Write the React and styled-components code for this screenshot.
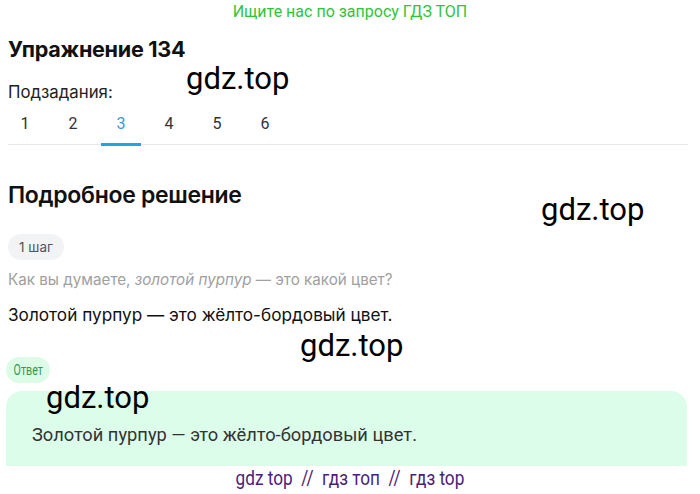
import React from "react";
import styled, { createGlobalStyle } from "styled-components";

const Global = createGlobalStyle`
  html, body { margin: 0; padding: 0; background: #fff; }
  body { font-family: Inter, "Noto Sans", sans-serif; color: #111; }
`;

const Page = styled.div`
  position: relative;
  width: 700px;
  height: 494px;
  overflow: hidden;
  padding: 0 8px;
  box-sizing: border-box;
`;

const Banner = styled.div`
  text-align: center;
  font-family: Roboto, sans-serif;
  font-size: 16px;
  line-height: 24px;
  color: #2fc43c;
  margin-left: -8px;
  margin-right: -8px;
`;

const Title = styled.h1`
  margin: 12px 0 0;
  font-family: Inter, sans-serif;
  font-size: 21.6px;
  line-height: 26px;
  font-weight: 700;
  letter-spacing: -0.3px;
  color: #111;
`;

const SubLabel = styled.div`
  margin-top: 20px;
  font-size: 16.8px;
  line-height: 20px;
  color: #222;
`;

const Tabs = styled.div`
  display: flex;
  margin-top: 10px;
  border-bottom: 1px solid #e8e8e8;
  margin-right: 4px;
`;

const Tab = styled.div`
  width: 40px;
  margin-right: 8px;
  text-align: center;
  font-family: Roboto, sans-serif;
  font-size: 16px;
  line-height: 20px;
  padding: 2px 0 9px;
  color: ${(p) => (p.$active ? "#3d9bd1" : "#333")};
  border-bottom: 3px solid ${(p) => (p.$active ? "#1ea7e4" : "transparent")};
  margin-bottom: -2px;
  &:first-child { margin-left: -3px; }
`;

const SectionTitle = styled.h2`
  margin: 36px 0 0;
  font-size: 23px;
  line-height: 28px;
  font-weight: 600;
  letter-spacing: -0.3px;
  color: #111;
`;

const Pill = styled.span`
  display: inline-flex;
  align-items: center;
  justify-content: center;
  height: 26px;
  width: ${(p) => (p.$green ? "44px" : "56px")};
  border-radius: 13px;
  font-size: ${(p) => (p.$green ? "14px" : "13.5px")};
  background: ${(p) => (p.$green ? "#dcfce8" : "#f2f3f5")};
  color: ${(p) => (p.$green ? "#2f9a4c" : "#555")};
  font-family: ${(p) => (p.$green ? "Roboto, sans-serif" : "Inter, sans-serif")};
  white-space: nowrap;
`;

const Narrow = styled.span`
  display: inline-block;
  transform: scaleX(0.76);
`;

const StepRow = styled.div`
  margin-top: 25px;
  display: flex;
`;

const Question = styled.p`
  margin: 10px 0 0;
  font-size: 15.2px;
  line-height: 20px;
  color: #a0a0a0;
  em { font-style: italic; }
`;

const Answer = styled.p`
  margin: 14px 0 0;
  font-size: 17.2px;
  line-height: 22px;
  color: #111;
`;

const AnswerRow = styled.div`
  margin-top: 31px;
  margin-left: -2px;
  display: flex;
`;

const AnswerBox = styled.div`
  margin: 8px 5px 0 -2px;
  height: 75px;
  background: #dcfde9;
  border-radius: 16px 16px 0 0;
  display: flex;
  align-items: center;
  padding: 11px 0 0 26px;
  box-sizing: border-box;
  font-family: Roboto, sans-serif;
  font-size: 18.3px;
  color: #333;
`;

const Footer = styled.div`
  text-align: center;
  font-family: Roboto, sans-serif;
  font-size: 20px;
  line-height: 24px;
  color: #4b1d7c;
`;

const FooterText = styled.span`
  display: inline-block;
  transform: scaleX(0.86);
  white-space: pre;
`;

const Watermark = styled.div`
  position: absolute;
  font-family: Roboto, sans-serif;
  font-size: 31px;
  line-height: 30px;
  color: #000;
  pointer-events: none;
`;

export default function App() {
  const tabs = [1, 2, 3, 4, 5, 6];
  return (
    <>
      <Global />
      <Page>
        <Banner>Ищите нас по запросу ГДЗ ТОП</Banner>
        <Title>Упражнение 134</Title>
        <SubLabel>Подзадания:</SubLabel>
        <Tabs>
          {tabs.map((t) => (
            <Tab key={t} $active={t === 3}>
              {t}
            </Tab>
          ))}
        </Tabs>
        <SectionTitle>Подробное решение</SectionTitle>
        <StepRow>
          <Pill>1 шаг</Pill>
        </StepRow>
        <Question>
          Как вы думаете, <em>золотой пурпур</em> — это какой цвет?
        </Question>
        <Answer>Золотой пурпур — это жёлто-бордовый цвет.</Answer>
        <AnswerRow>
          <Pill $green>
            <Narrow>Ответ</Narrow>
          </Pill>
        </AnswerRow>
        <AnswerBox>Золотой пурпур — это жёлто-бордовый цвет.</AnswerBox>
        <Footer>
          <FooterText>{"gdz top  //  гдз топ  //  гдз top"}</FooterText>
        </Footer>

        <Watermark style={{ left: 186, top: 64 }}>gdz.top</Watermark>
        <Watermark style={{ left: 541, top: 195 }}>gdz.top</Watermark>
        <Watermark style={{ left: 300, top: 331 }}>gdz.top</Watermark>
        <Watermark style={{ left: 46, top: 383 }}>gdz.top</Watermark>
      </Page>
    </>
  );
}
